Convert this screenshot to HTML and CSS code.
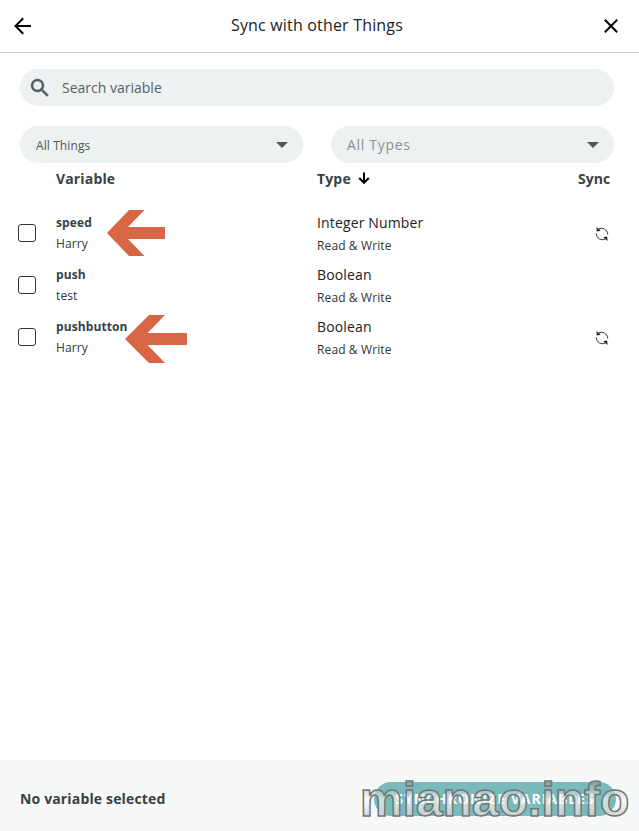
FILE: index.html
```html
<!DOCTYPE html>
<html lang="en">
<head>
<meta charset="utf-8">
<title>Sync with other Things</title>
<link rel="stylesheet" href="styles.css">
</head>
<body>
<div class="dialog">
  <header class="header">
    <svg class="back" width="18" height="18" viewBox="0 0 18 18"><path d="M17 9H2M9.200 1.200L1.500 9l7.700 7.800"/></svg>
    <h1 class="title">Sync with other Things</h1>
    <svg class="close" width="14" height="14" viewBox="0 0 14 14"><path d="M.8.8l12.400 12.400M13.200.8L.8 13.200"/></svg>
  </header>
  <main class="content">
    <div class="search">
      <svg width="24" height="24" viewBox="0 0 24 24"><path d="M15.500 14h-.79l-.28-.27A6.471 6.471 0 0 0 16 9.500 6.500 6.500 0 1 0 9.500 16c1.610 0 3.090-.59 4.230-1.570l.27.28v.79l5 4.990L20.490 19l-4.990-5zm-6 0C7.010 14 5 11.990 5 9.500S7.010 5 9.500 5 14 7.010 14 9.500 11.990 14 9.500 14z"/></svg>
      <span>Search variable</span>
    </div>
    <div class="filters">
      <div class="select"><span>All Things</span><i class="caret"></i></div>
      <div class="select types"><span>All Types</span><i class="caret"></i></div>
    </div>
    <div class="row head">
      <span></span><span>Variable</span>
      <span class="sort">Type <svg width="12" height="12" viewBox="0 0 12 12"><path d="M6 .5v10M1.200 6L6 10.800 10.800 6"/></svg></span>
      <span class="sync">Sync</span>
    </div>
    <div class="row">
      <span class="checkbox"></span>
      <div class="variable"><b>speed</b><span>Harry</span>
        <svg class="pointer first" width="58" height="46" viewBox="0 0 58 46"><path d="M0 23L22 0h15.500L21 17h37v12H21l16.500 17H22z"/></svg>
      </div>
      <div class="type"><span>Integer Number</span><small>Read &amp; Write</small></div>
      <svg class="cycle" width="14" height="14" viewBox="0 0 14 14"><path class="arc" d="M3.500 2.200C7.500-.2 12.500 2.500 12.800 7.500M10.500 11.800C6.500 14.200 1.500 11.500 1.200 6.500"/><path class="tip" d="M1.500 0l.3 4.500 4-.8zM12.500 14l-.3-4.500-4 .8z"/></svg>
    </div>
    <div class="row">
      <span class="checkbox"></span>
      <div class="variable"><b>push</b><span>test</span></div>
      <div class="type"><span>Boolean</span><small>Read &amp; Write</small></div>
    </div>
    <div class="row">
      <span class="checkbox"></span>
      <div class="variable"><b>pushbutton</b><span>Harry</span>
        <svg class="pointer second" width="62" height="48" viewBox="0 0 62 48"><path d="M0 24L24 0h16L22.500 18H62v12H22.500L40 48H24z"/></svg>
      </div>
      <div class="type"><span>Boolean</span><small>Read &amp; Write</small></div>
      <svg class="cycle" width="14" height="14" viewBox="0 0 14 14"><path class="arc" d="M3.500 2.200C7.500-.2 12.500 2.500 12.800 7.500M10.500 11.800C6.500 14.200 1.500 11.500 1.200 6.500"/><path class="tip" d="M1.500 0l.3 4.500 4-.8zM12.500 14l-.3-4.500-4 .8z"/></svg>
    </div>
  </main>
  <footer class="footer">
    <b>No variable selected</b>
    <div class="button">SYNCHRONIZE VARIABLES</div>
    <svg class="watermark" width="282" height="60" viewBox="0 0 282 60">
      <defs><linearGradient id="silver" x1="0" y1="0" x2="0" y2="1"><stop offset=".2" stop-color="#999" stop-opacity=".6"/><stop offset=".5" stop-color="#fff" stop-opacity=".6"/><stop offset=".8" stop-color="#cdcfcf" stop-opacity=".9"/></linearGradient></defs>
      <text x="3" y="46">mianao.info</text>
    </svg>
  </footer>
</div>
</body>
</html>
```
FILE: styles.css
```css
* { box-sizing: border-box; }
body { margin: 0; background: #fff; color: #374146; font-family: "Open Sans", sans-serif; }
.dialog { height: 831px; display: flex; flex-direction: column; overflow: hidden; }
.header { height: 53px; flex: none; display: flex; align-items: center; justify-content: space-between; padding: 0 21px 0 14px; border-bottom: 1px solid #c9c9c9; }
.header svg { fill: none; stroke: #000; stroke-width: 2; }
.title { margin: 0 2px 2px 0; font-size: 16px; font-weight: 400; letter-spacing: .18px; color: #222; line-height: 24px; }
.content { flex: 1; padding-top: 16px; }
.search { height: 37px; margin: 0 25px 0 20px; padding-left: 8px; border-radius: 19px; background: #ecf1f1; display: flex; align-items: center; gap: 10px; font-size: 14px; color: #566267; }
.search svg { fill: #4e5b61; stroke: #4e5b61; stroke-width: .5; }
.filters { display: grid; grid-template-columns: 283px 283px; gap: 28px; margin: 20px 0 0 20px; }
.select { height: 37px; border-radius: 19px; padding: 1px 15px 0 16px; background: #ecf1f1; display: flex; align-items: center; justify-content: space-between; font-size: 12px; letter-spacing: .1px; color: #4e5658; }
.types { font-size: 14px; letter-spacing: .7px; color: #8a9091; }
.types span { margin-bottom: 2px; }
.caret { border: 6px solid transparent; border-top-color: #4e5658; border-bottom: 0; }
.row { display: grid; grid-template-columns: 38px 261px 240px 54px; height: 52px; margin-left: 18px; align-items: center; }
.head { height: 30px; margin-bottom: 14px; font-size: 14px; font-weight: 700; letter-spacing: .15px; }
.sort { display: flex; align-items: center; gap: 7px; }
.sort svg { fill: none; stroke: #000; stroke-width: 2; }
.sync { margin-left: 21px; letter-spacing: 0; }
.checkbox { width: 18px; height: 18px; border: 1px solid #333; border-radius: 3px; }
.variable, .type { display: flex; flex-direction: column; position: relative; font-size: 12px; line-height: 21px; }
.variable b { letter-spacing: .1px; }
.variable > span { color: #2f3436; letter-spacing: .1px; }
.type span { font-size: 14px; line-height: 23px; letter-spacing: .14px; color: #222; }
.type small { font-size: 12px; line-height: 21px; padding-top: 1px; margin-bottom: -1px; letter-spacing: .12px; color: #333; }
.cycle { margin: 1px 0 0 38px; }
.arc { fill: none; stroke: #333; stroke-width: 1; }
.tip { fill: #222; }
.pointer { position: absolute; fill: #d86544; }
.first { left: 51px; top: -2px; }
.second { left: 69px; top: -1px; }
.footer { position: relative; height: 71px; flex: none; display: flex; align-items: center; justify-content: space-between; padding: 6px 23px 0 20px; background: #f6f9f8; font-size: 14px; letter-spacing: .15px; }
.button { width: 242px; height: 34px; border-radius: 17px; background: #79bbbc; color: #fff; font-size: 14px; font-weight: 700; letter-spacing: 1px; display: flex; align-items: center; justify-content: center; }
.watermark { position: absolute; left: 357px; top: 10px; }
.watermark text { font: bold 48px "Liberation Sans", sans-serif; letter-spacing: 0; fill: url(#silver); stroke: #6f7777; stroke-width: 1.5; }
```
